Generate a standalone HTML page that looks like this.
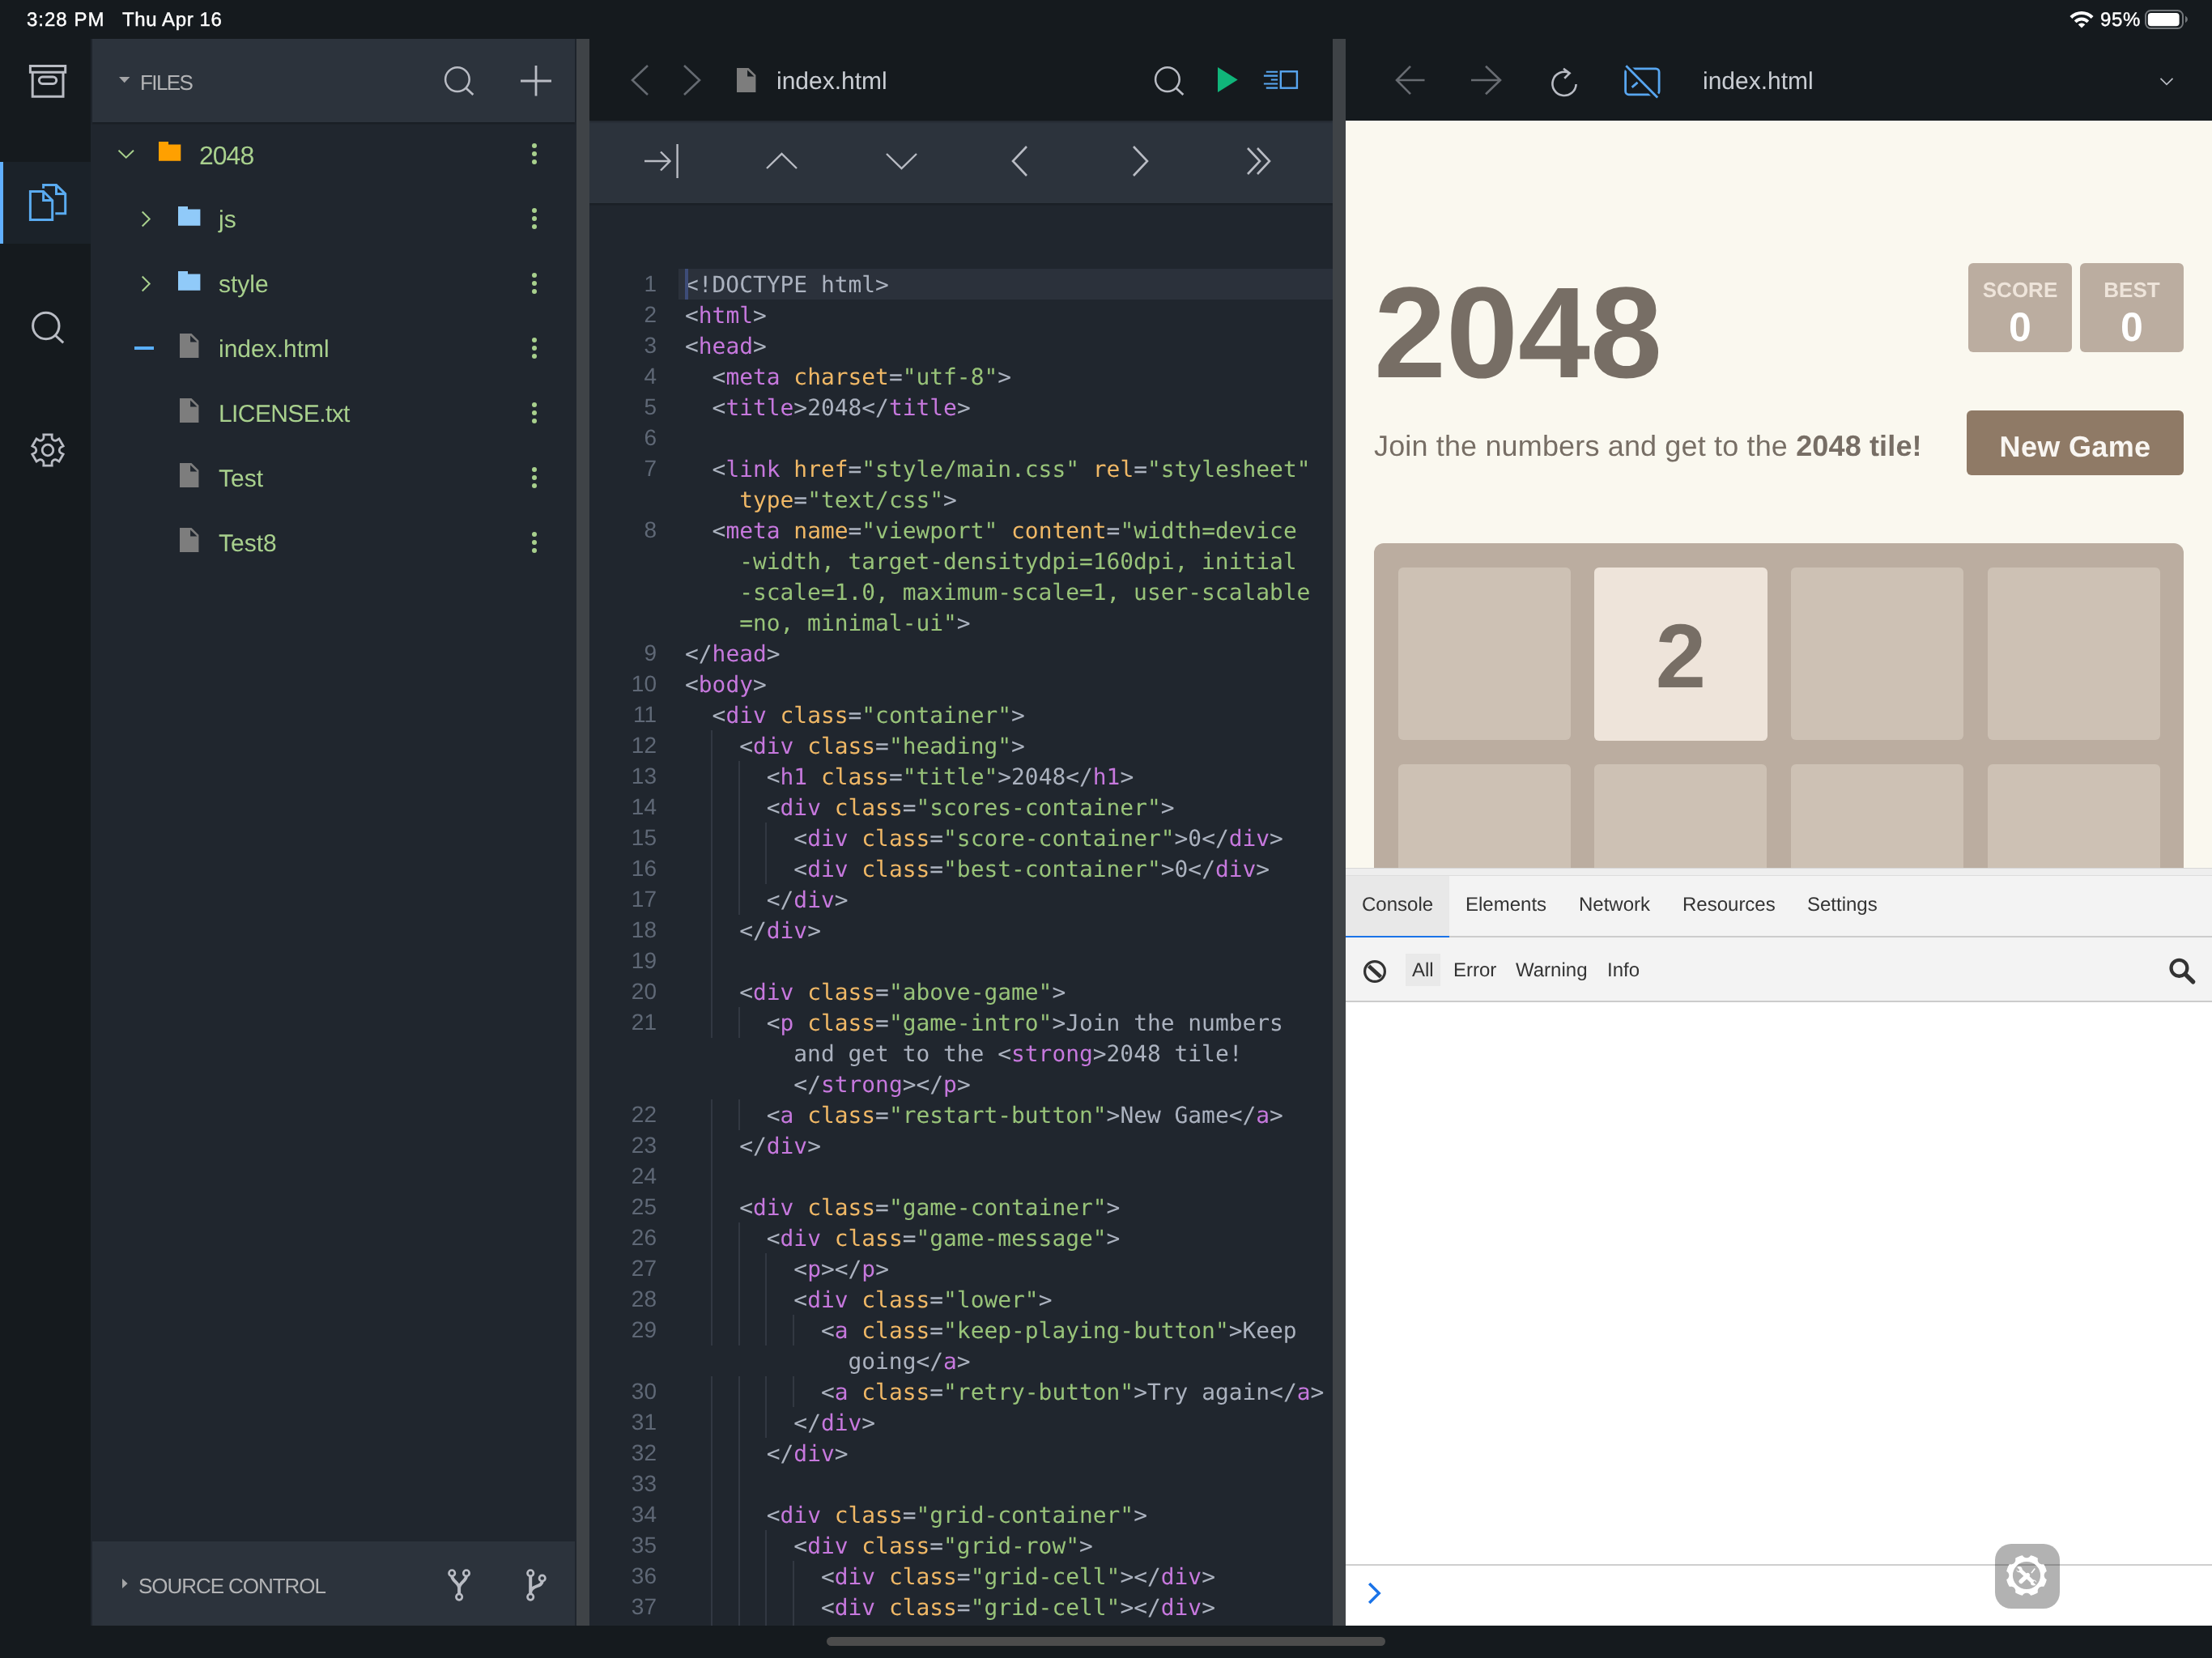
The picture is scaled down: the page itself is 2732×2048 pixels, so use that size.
<!DOCTYPE html>
<html lang="en">
<head>
<meta charset="utf-8">
<title>index.html — 2048</title>
<style>
*{box-sizing:border-box;margin:0;padding:0}
html,body{width:2732px;height:2048px;overflow:hidden;background:#151a1e}
body{position:relative;-webkit-font-smoothing:antialiased;text-rendering:geometricPrecision;font-family:"Liberation Sans",sans-serif;color:#fff}
.abs{position:absolute}
.gs,#status,.nm,.cap,.title,#game h1,.intro,.score small,.score b,.btn b,.tile b,#dev .tabs span,#dev .flt span{will-change:transform}
.score b,.btn b,.tile b{display:block;font-weight:bold}
svg{position:absolute;overflow:visible}
.st{fill:none;stroke:#b9bcc4;stroke-width:3;stroke-linecap:butt;stroke-linejoin:miter}

/* status bar */
#status{position:absolute;left:0;top:0;width:2732px;height:48px;font-weight:normal;font-size:24px;line-height:50px;color:#fff;-webkit-text-stroke:.4px #fff}
#status span{position:absolute;top:0;white-space:nowrap}

/* activity bar */
#act{position:absolute;left:0;top:48px;width:112px;height:1960px;background:#151a1e}
#act .sel{position:absolute;left:0;top:152px;width:112px;height:101px;background:#1b2229;border-left:4px solid #61b0ff}

/* files panel */
#files{position:absolute;left:112px;top:48px;width:600px;height:1960px;background:#20262e}
#files .hd{position:absolute;left:2px;top:0;width:596px;height:103px;background:#2c333c;box-shadow:0 2px 2px rgba(0,0,0,.25)}
#files .ft{position:absolute;left:2px;bottom:0;width:596px;height:104px;background:#2c333c}
.cap{position:absolute;font-size:26px;color:#b2b3b5;white-space:nowrap;line-height:30px}
.trow{position:absolute;left:0;width:599px;height:80px}
.trow .nm{position:absolute;top:2px;line-height:80px;font-size:30px;color:#a8d08d;white-space:nowrap}
.trow .dots{position:absolute;left:545px;top:27px;width:6px;height:26px}
.trow .dots i{position:absolute;left:0;width:6px;height:6px;border-radius:3px;background:#a8d08d}

.split{position:absolute;top:48px;height:1960px;background:#3f4347}

/* editor */
#ed{position:absolute;left:728px;top:48px;width:918px;height:1960px;background:#20262e;overflow:hidden}
#ed .hd{position:absolute;left:0;top:0;width:918px;height:101px;background:#151a1e;box-shadow:0 2px 2px rgba(0,0,0,.2);z-index:3}
#ed .tb{position:absolute;left:0;top:101px;width:918px;height:102px;background:#2c333c;box-shadow:0 2px 2px rgba(0,0,0,.22);z-index:2}
.title{position:absolute;font-size:30px;color:#c9cdd3;white-space:nowrap;line-height:36px}
#code{will-change:transform;position:absolute;left:0;top:203px;width:918px;height:1757px;overflow:hidden;font-family:"DejaVu Sans Mono","Liberation Mono",monospace;font-size:27.9px}
.row{position:absolute;left:0;width:918px;height:38px;line-height:38px;white-space:pre}
.row.cur:before{content:"";position:absolute;left:110px;right:0;top:0;height:38px;background:#2b313b}
.row.cur:after{content:"";position:absolute;left:117.5px;top:0;width:4px;height:38px;background:#3d4c78}
.row .c{position:absolute;left:118px;top:.5px;color:#abb2bf}
.row .ln{position:absolute;right:835px;top:0;font-family:"Liberation Sans",sans-serif;font-weight:normal;font-size:28px;color:#5f6876}
.row .g{position:absolute;top:0;width:2px;height:38px;background:#323842}
.t{color:#c678dd}.a{color:#f0b866}.s{color:#98c379}.p{color:#abb2bf}

/* preview */
#pv{position:absolute;left:1662px;top:48px;width:1070px;height:1960px;background:#faf8ef;overflow:hidden}
#pv .hd{position:absolute;left:0;top:0;width:1070px;height:101px;background:#151a1e}
#game{position:absolute;left:0;top:101px;width:1070px;height:923px;background:#faf8ef;color:#776e65;overflow:hidden}
#game h1{position:absolute;left:35px;top:167px;font-size:160px;font-weight:bold;line-height:190px;white-space:nowrap}
.score{position:absolute;top:176px;width:128px;height:110px;background:#bbada0;border-radius:6px;text-align:center;color:#fff;font-weight:bold;font-size:50px;line-height:60px}
.score small{display:block;margin-top:18px;font-size:26px;line-height:31px;color:#eee4da}
.intro{position:absolute;left:35px;top:360px;font-size:36px;line-height:84px;white-space:nowrap;letter-spacing:.15px}
.btn{position:absolute;left:767px;top:358px;width:268px;height:80px;border-radius:6px;background:#8f7a66;color:#f9f6f2;font-weight:bold;font-size:36px;line-height:89px;text-align:center;letter-spacing:.35px}
.board{position:absolute;left:35px;top:522px;width:1000px;height:1000px;border-radius:12px;background:#bbada0}
.cell{position:absolute;width:213px;height:213px;border-radius:6px;background:#cdc1b4}
.tile{background:#eee4da;color:#776e65;font-weight:bold;font-size:112px;line-height:220px;text-align:center}

/* devtools */
#dev{position:absolute;left:0;top:1024px;width:1070px;height:936px;background:#fff;color:#333}
#dev .grip{position:absolute;left:0;top:0;width:1070px;height:10px;background:#eee;border-top:1px solid #d8d8d8;border-bottom:1px solid #ddd}
#dev .tabs{position:absolute;left:0;top:10px;width:1070px;height:76px;background:#f3f3f3;border-bottom:2px solid #ccc;font-size:24px;line-height:72px}
#dev .tabs span{position:absolute;top:0;height:76px;white-space:nowrap}
#dev .tabs .on{left:0;width:128px;background:#e8e8e8;border-bottom:2px solid #1a73e8}
#dev .flt{position:absolute;left:0;top:86px;width:1070px;height:80px;background:#f3f3f3;border-bottom:2px solid #ccc;font-size:24px;line-height:77px}
#dev .flt span{position:absolute;top:2px;white-space:nowrap}
#dev .flt .all{left:74px;top:20px;width:43px;height:40px;background:#e9e9e9}
#dev .inp{position:absolute;left:0;top:860px;width:1070px;height:76px;border-top:2px solid #cfcfcf;background:#fff}
#eruda{position:absolute;left:802px;top:835px;width:80px;height:80px;border-radius:20px;background:rgba(0,0,0,.3)}

#home{position:absolute;left:1021px;top:2022px;width:690px;height:11px;border-radius:5.5px;background:#4c4c4c}
</style>
</head>
<body>

<!-- ============ STATUS BAR ============ -->
<div id="status">
  <span style="left:33px;letter-spacing:1px">3:28 PM</span>
  <span style="left:151px;letter-spacing:.6px">Thu Apr 16</span>
  <span style="left:2594px;letter-spacing:.7px">95%</span>
  <svg style="left:2557px;top:13.7px" width="28" height="22" viewBox="0 0 28 22"><path d="M-0.57 6.03A20.60 20.60 0 0 1 28.57 6.03L25.67 8.93A16.50 16.50 0 0 0 2.33 8.93ZM4.81 11.41A13.00 13.00 0 0 1 23.19 11.41L20.43 14.17A9.10 9.10 0 0 0 7.57 14.17ZM14 20.6L9.69 16.29A6.1 6.1 0 0 1 18.31 16.29Z" fill="#fff"/></svg>
  <svg style="left:2649px;top:12px" width="54" height="24" viewBox="0 0 54 24"><rect x="1" y="1" width="46" height="22" rx="6.5" fill="none" stroke="#73777b" stroke-width="2"/><rect x="3.8" y="3.9" width="38.8" height="16.3" rx="4" fill="#fff"/><path d="M50 7.4 Q53 9 53 11.8 Q53 14.6 50 16.2 Z" fill="#73777b"/></svg>
</div>

<!-- ============ ACTIVITY BAR ============ -->
<div id="act">
  <div class="sel"></div>
  <!-- archive -->
  <svg style="left:35px;top:31px" width="48" height="44" viewBox="0 0 48 44"><path class="st" d="M2.4 2.5H45.7V10.3H2.4Z M5.2 10.3V40.3H43V10.3"/><rect class="st" x="13.3" y="16.1" width="21.4" height="8.3" rx="4.15"/></svg>
  <!-- files -->
  <svg style="left:35px;top:178px" width="48" height="48" viewBox="0 0 48 48"><path class="st" style="stroke:#5aabf0" d="M18.6 6.8V2.4H34.5L45.7 13.5V37.8H33.3 M34.5 2.4V13.5H45.7 M2.4 10.4H18.6L29.7 21.5V45.6H2.4Z M18.6 10.4V21.5H29.7"/></svg>
  <!-- search -->
  <svg style="left:38px;top:336px" width="42" height="42" viewBox="0 0 42 42"><circle class="st" cx="18.8" cy="18.5" r="16.2"/><path class="st" d="M30 30L40.2 39.4"/></svg>
  <!-- gear -->
  <svg style="left:38px;top:487px" width="42" height="42" viewBox="0 0 42 42"><circle class="st" style="stroke-width:2.8" cx="21" cy="21" r="6.8"/><path class="st" style="stroke-width:2.8" d="M16.01 5.17 L15.81 1.89 L26.19 1.89 L25.99 5.17 A4.22 4.22 0 0 0 32.21 8.76 L34.95 6.95 L40.14 15.94 L37.21 17.41 A4.22 4.22 0 0 0 37.21 24.59 L40.14 26.06 L34.95 35.05 L32.21 33.24 A4.22 4.22 0 0 0 25.99 36.83 L26.19 40.11 L15.81 40.11 L16.01 36.83 A4.22 4.22 0 0 0 9.79 33.24 L7.05 35.05 L1.86 26.06 L4.79 24.59 A4.22 4.22 0 0 0 4.79 17.41 L1.86 15.94 L7.05 6.95 L9.79 8.76 A4.22 4.22 0 0 0 16.01 5.17 Z"/></svg>
</div>

<!-- ============ FILES PANEL ============ -->
<div id="files">
  <div class="hd">
    <svg style="left:33px;top:47px" width="14" height="8" viewBox="0 0 14 8"><path d="M0 0H13.4L6.7 7.3Z" fill="#a4a5a7"/></svg>
    <span class="cap" style="left:59px;top:39px;letter-spacing:-1.6px">FILES</span>
    <svg style="left:434px;top:34px" width="38" height="38" viewBox="0 0 38 38"><circle class="st" style="stroke-width:2.5" cx="16.9" cy="16.1" r="14.8"/><path class="st" style="stroke-width:2.7" d="M27.2 26.4L36.4 35.1"/></svg>
    <svg style="left:529px;top:33px" width="38" height="38" viewBox="0 0 38 38"><path class="st" style="stroke-width:2.8" d="M19 0V37.5M0 19H38"/></svg>
  </div>

  <div class="trow" style="top:102px">
    <svg style="left:34px;top:35px" width="20" height="11" viewBox="0 0 20 11"><path class="st" style="stroke:#a8d08d;stroke-width:2" d="M0.5 0.7L9.7 9.6L19 0.7"/></svg>
    <svg style="left:84px;top:25px" width="28" height="24" viewBox="0 0 28 24"><path d="M0 0H12V3.6H27.3V23.7H0Z" fill="#ffa000"/></svg>
    <span class="nm" style="left:134px;font-size:32px;letter-spacing:-1px">2048</span>
    <div class="dots"><i style="top:0"></i><i style="top:10px"></i><i style="top:20px"></i></div>
  </div>
  <div class="trow" style="top:182px">
    <svg style="left:62.5px;top:30.5px" width="11" height="20" viewBox="0 0 11 20"><path class="st" style="stroke:#a8d08d;stroke-width:2" d="M0.7 0.5L9.7 9.5L0.7 18.5"/></svg>
    <svg style="left:108px;top:25px" width="28" height="24" viewBox="0 0 28 24"><path d="M0 0H12V3.6H27.4V23.7H0Z" fill="#90caf9"/></svg>
    <span class="nm" style="left:158px">js</span>
    <div class="dots"><i style="top:0"></i><i style="top:10px"></i><i style="top:20px"></i></div>
  </div>
  <div class="trow" style="top:262px">
    <svg style="left:62.5px;top:30.5px" width="11" height="20" viewBox="0 0 11 20"><path class="st" style="stroke:#a8d08d;stroke-width:2" d="M0.7 0.5L9.7 9.5L0.7 18.5"/></svg>
    <svg style="left:108px;top:25px" width="28" height="24" viewBox="0 0 28 24"><path d="M0 0H12V3.6H27.4V23.7H0Z" fill="#90caf9"/></svg>
    <span class="nm" style="left:158px">style</span>
    <div class="dots"><i style="top:0"></i><i style="top:10px"></i><i style="top:20px"></i></div>
  </div>
  <div class="trow" style="top:342px">
    <i class="abs" style="left:54px;top:38px;width:24px;height:4px;background:#5aafff"></i>
    <svg style="left:110px;top:22px" width="24" height="30" viewBox="0 0 24 30"><path fill-rule="evenodd" d="M0 0H14.5L23.4 8.7V30H0Z M13.1 2.5V10.6H21.5Z" fill="#7d7d7d"/></svg>
    <span class="nm" style="left:158px">index.html</span>
    <div class="dots"><i style="top:0"></i><i style="top:10px"></i><i style="top:20px"></i></div>
  </div>
  <div class="trow" style="top:422px">
    <svg style="left:110px;top:22px" width="24" height="30" viewBox="0 0 24 30"><path fill-rule="evenodd" d="M0 0H14.5L23.4 8.7V30H0Z M13.1 2.5V10.6H21.5Z" fill="#7d7d7d"/></svg>
    <span class="nm" style="left:158px;letter-spacing:-.6px">LICENSE.txt</span>
    <div class="dots"><i style="top:0"></i><i style="top:10px"></i><i style="top:20px"></i></div>
  </div>
  <div class="trow" style="top:502px">
    <svg style="left:110px;top:22px" width="24" height="30" viewBox="0 0 24 30"><path fill-rule="evenodd" d="M0 0H14.5L23.4 8.7V30H0Z M13.1 2.5V10.6H21.5Z" fill="#7d7d7d"/></svg>
    <span class="nm" style="left:158px">Test</span>
    <div class="dots"><i style="top:0"></i><i style="top:10px"></i><i style="top:20px"></i></div>
  </div>
  <div class="trow" style="top:582px">
    <svg style="left:110px;top:22px" width="24" height="30" viewBox="0 0 24 30"><path fill-rule="evenodd" d="M0 0H14.5L23.4 8.7V30H0Z M13.1 2.5V10.6H21.5Z" fill="#7d7d7d"/></svg>
    <span class="nm" style="left:158px">Test8</span>
    <div class="dots"><i style="top:0"></i><i style="top:10px"></i><i style="top:20px"></i></div>
  </div>

  <div class="ft">
    <svg style="left:37px;top:46px" width="8" height="14" viewBox="0 0 8 14"><path d="M0 0L6.6 6L0 12Z" fill="#a4a5a7"/></svg>
    <span class="cap" style="left:57px;top:40px;letter-spacing:-1.05px">SOURCE CONTROL</span>
    <!-- fork -->
    <svg style="left:438.7px;top:34.3px" width="30" height="40" viewBox="0 0 30 40"><g class="st" style="stroke-width:2.7"><circle cx="5.2" cy="5.2" r="3.7"/><circle cx="23" cy="5.2" r="3.7"/><circle cx="14.1" cy="34.6" r="3.7"/></g><path class="st" style="stroke-width:4" d="M5.2 8.8C5.6 15 14.1 17.5 14.1 23.5V31 M23 8.8C22.6 15 14.1 17.5 14.1 23.5"/></svg>
    <!-- branch -->
    <svg style="left:536.4px;top:34.3px" width="30" height="40" viewBox="0 0 30 40"><g class="st" style="stroke-width:2.7"><circle cx="5.2" cy="5.2" r="3.7"/><circle cx="19.7" cy="11.5" r="3.7"/><circle cx="5.2" cy="34.6" r="3.7"/></g><path class="st" style="stroke-width:4" d="M5.2 8.8V31 M19.7 15.2C19.5 22.5 6 20 5.2 29"/></svg>
  </div>
</div>
<div class="split" style="left:712px;width:16px"></div>

<!-- ============ EDITOR ============ -->
<div id="ed">
  <div class="hd">
    <svg style="left:51px;top:31.5px" width="22" height="38" viewBox="0 0 22 38"><path class="st" style="stroke:#656a71;stroke-width:2.6" d="M21 1L2 19L21 37"/></svg>
    <svg style="left:116px;top:31.5px" width="22" height="38" viewBox="0 0 22 38"><path class="st" style="stroke:#656a71;stroke-width:2.6" d="M1 1L20 19L1 37"/></svg>
    <svg style="left:182px;top:36px" width="24" height="30" viewBox="0 0 24 30"><path fill-rule="evenodd" d="M0 0H14.5L23.4 8.7V30H0Z M13.1 2.5V10.6H21.5Z" fill="#7d7d7d"/></svg>
    <span class="title" style="left:231px;top:35px">index.html</span>
    <svg style="left:697px;top:34px" width="38" height="38" viewBox="0 0 38 38"><circle class="st" style="stroke-width:2.5" cx="16.9" cy="16.1" r="14.8"/><path class="st" style="stroke-width:2.7" d="M27.2 26.4L36.4 35.1"/></svg>
    <svg style="left:775.5px;top:35px" width="25" height="31" viewBox="0 0 25 31"><path d="M0 0L24.7 15.5L0 31Z" fill="#10b57a"/></svg>
    <svg style="left:832px;top:39px" width="44" height="24" viewBox="0 0 44 24"><path class="st" style="stroke:#58a6f0;stroke-width:2.2" d="M3.8 1.75H18.1 M0.9 6.6H18.1 M9.8 11.5H18.1 M0.9 16.5H18.1 M3.8 21.55H18.1"/><rect class="st" style="stroke:#58a6f0;stroke-width:2.4" x="21.8" y="1.3" width="20.1" height="20.4"/></svg>
  </div>
  <div class="tb">
    <!-- tab -->
    <svg style="left:68px;top:28.5px" width="44" height="42" viewBox="0 0 44 42"><path class="st" style="stroke-width:2.4" d="M0 21H31.5 M20 9.5L31.5 21L20 32.5 M40.6 0V42"/></svg>
    <svg style="left:217.5px;top:38.5px" width="39" height="21" viewBox="0 0 39 21"><path class="st" style="stroke-width:2.4" d="M1 20L19.5 2L38 20"/></svg>
    <svg style="left:365.5px;top:40px" width="39" height="21" viewBox="0 0 39 21"><path class="st" style="stroke-width:2.4" d="M1 1L19.5 19L38 1"/></svg>
    <svg style="left:521px;top:31px" width="20" height="38" viewBox="0 0 20 38"><path class="st" style="stroke-width:2.6" d="M19 1L2 19L19 37"/></svg>
    <svg style="left:671px;top:31px" width="20" height="38" viewBox="0 0 20 38"><path class="st" style="stroke-width:2.6" d="M1 1L18 19L1 37"/></svg>
    <svg style="left:812px;top:33px" width="30" height="34" viewBox="0 0 30 34"><path class="st" style="stroke-width:2.6" d="M1 1L16 17L1 33 M13 1L28 17L13 33"/></svg>
  </div>
  <div id="code">
<div class="row cur" style="top:81px"><b class="ln">1</b><span class="c"><span class="p">&lt;!DOCTYPE html&gt;</span></span></div>
<div class="row" style="top:119px"><b class="ln">2</b><span class="c"><span class="p">&lt;</span><span class="t">html</span><span class="p">&gt;</span></span></div>
<div class="row" style="top:157px"><b class="ln">3</b><span class="c"><span class="p">&lt;</span><span class="t">head</span><span class="p">&gt;</span></span></div>
<div class="row" style="top:195px"><b class="ln">4</b><span class="c"><span class="p">  </span><span class="p">&lt;</span><span class="t">meta</span> <span class="a">charset</span><span class="p">=</span><span class="s">&quot;utf-8&quot;</span><span class="p">&gt;</span></span></div>
<div class="row" style="top:233px"><b class="ln">5</b><span class="c"><span class="p">  </span><span class="p">&lt;</span><span class="t">title</span><span class="p">&gt;</span><span class="p">2048</span><span class="p">&lt;/</span><span class="t">title</span><span class="p">&gt;</span></span></div>
<div class="row" style="top:271px"><b class="ln">6</b><span class="c"></span></div>
<div class="row" style="top:309px"><b class="ln">7</b><span class="c"><span class="p">  </span><span class="p">&lt;</span><span class="t">link</span> <span class="a">href</span><span class="p">=</span><span class="s">&quot;style/main.css&quot;</span> <span class="a">rel</span><span class="p">=</span><span class="s">&quot;stylesheet&quot;</span></span></div>
<div class="row" style="top:347px"><span class="c">    <span class="a">type</span><span class="p">=</span><span class="s">&quot;text/css&quot;</span><span class="p">&gt;</span></span></div>
<div class="row" style="top:385px"><b class="ln">8</b><span class="c"><span class="p">  </span><span class="p">&lt;</span><span class="t">meta</span> <span class="a">name</span><span class="p">=</span><span class="s">&quot;viewport&quot;</span> <span class="a">content</span><span class="p">=</span><span class="s">&quot;width=device</span></span></div>
<div class="row" style="top:423px"><span class="c"><span class="s">    -width, target-densitydpi=160dpi, initial</span></span></div>
<div class="row" style="top:461px"><span class="c"><span class="s">    -scale=1.0, maximum-scale=1, user-scalable</span></span></div>
<div class="row" style="top:499px"><span class="c"><span class="s">    =no, minimal-ui&quot;</span><span class="p">&gt;</span></span></div>
<div class="row" style="top:537px"><b class="ln">9</b><span class="c"><span class="p">&lt;/</span><span class="t">head</span><span class="p">&gt;</span></span></div>
<div class="row" style="top:575px"><b class="ln">10</b><span class="c"><span class="p">&lt;</span><span class="t">body</span><span class="p">&gt;</span></span></div>
<div class="row" style="top:613px"><b class="ln">11</b><span class="c"><span class="p">  </span><span class="p">&lt;</span><span class="t">div</span> <span class="a">class</span><span class="p">=</span><span class="s">&quot;container&quot;</span><span class="p">&gt;</span></span></div>
<div class="row" style="top:651px"><b class="ln">12</b><i class="g" style="left:150.1px"></i><span class="c"><span class="p">    </span><span class="p">&lt;</span><span class="t">div</span> <span class="a">class</span><span class="p">=</span><span class="s">&quot;heading&quot;</span><span class="p">&gt;</span></span></div>
<div class="row" style="top:689px"><b class="ln">13</b><i class="g" style="left:150.1px"></i><i class="g" style="left:183.7px"></i><span class="c"><span class="p">      </span><span class="p">&lt;</span><span class="t">h1</span> <span class="a">class</span><span class="p">=</span><span class="s">&quot;title&quot;</span><span class="p">&gt;</span><span class="p">2048</span><span class="p">&lt;/</span><span class="t">h1</span><span class="p">&gt;</span></span></div>
<div class="row" style="top:727px"><b class="ln">14</b><i class="g" style="left:150.1px"></i><i class="g" style="left:183.7px"></i><span class="c"><span class="p">      </span><span class="p">&lt;</span><span class="t">div</span> <span class="a">class</span><span class="p">=</span><span class="s">&quot;scores-container&quot;</span><span class="p">&gt;</span></span></div>
<div class="row" style="top:765px"><b class="ln">15</b><i class="g" style="left:150.1px"></i><i class="g" style="left:183.7px"></i><i class="g" style="left:217.3px"></i><span class="c"><span class="p">        </span><span class="p">&lt;</span><span class="t">div</span> <span class="a">class</span><span class="p">=</span><span class="s">&quot;score-container&quot;</span><span class="p">&gt;</span><span class="p">0</span><span class="p">&lt;/</span><span class="t">div</span><span class="p">&gt;</span></span></div>
<div class="row" style="top:803px"><b class="ln">16</b><i class="g" style="left:150.1px"></i><i class="g" style="left:183.7px"></i><i class="g" style="left:217.3px"></i><span class="c"><span class="p">        </span><span class="p">&lt;</span><span class="t">div</span> <span class="a">class</span><span class="p">=</span><span class="s">&quot;best-container&quot;</span><span class="p">&gt;</span><span class="p">0</span><span class="p">&lt;/</span><span class="t">div</span><span class="p">&gt;</span></span></div>
<div class="row" style="top:841px"><b class="ln">17</b><i class="g" style="left:150.1px"></i><i class="g" style="left:183.7px"></i><span class="c"><span class="p">      </span><span class="p">&lt;/</span><span class="t">div</span><span class="p">&gt;</span></span></div>
<div class="row" style="top:879px"><b class="ln">18</b><i class="g" style="left:150.1px"></i><span class="c"><span class="p">    </span><span class="p">&lt;/</span><span class="t">div</span><span class="p">&gt;</span></span></div>
<div class="row" style="top:917px"><b class="ln">19</b><i class="g" style="left:150.1px"></i><span class="c"></span></div>
<div class="row" style="top:955px"><b class="ln">20</b><i class="g" style="left:150.1px"></i><span class="c"><span class="p">    </span><span class="p">&lt;</span><span class="t">div</span> <span class="a">class</span><span class="p">=</span><span class="s">&quot;above-game&quot;</span><span class="p">&gt;</span></span></div>
<div class="row" style="top:993px"><b class="ln">21</b><i class="g" style="left:150.1px"></i><i class="g" style="left:183.7px"></i><span class="c"><span class="p">      </span><span class="p">&lt;</span><span class="t">p</span> <span class="a">class</span><span class="p">=</span><span class="s">&quot;game-intro&quot;</span><span class="p">&gt;</span><span class="p">Join the numbers</span></span></div>
<div class="row" style="top:1031px"><span class="c"><span class="p">        and get to the </span><span class="p">&lt;</span><span class="t">strong</span><span class="p">&gt;</span><span class="p">2048 tile!</span></span></div>
<div class="row" style="top:1069px"><span class="c"><span class="p">        </span><span class="p">&lt;/</span><span class="t">strong</span><span class="p">&gt;</span><span class="p">&lt;/</span><span class="t">p</span><span class="p">&gt;</span></span></div>
<div class="row" style="top:1107px"><b class="ln">22</b><i class="g" style="left:150.1px"></i><i class="g" style="left:183.7px"></i><span class="c"><span class="p">      </span><span class="p">&lt;</span><span class="t">a</span> <span class="a">class</span><span class="p">=</span><span class="s">&quot;restart-button&quot;</span><span class="p">&gt;</span><span class="p">New Game</span><span class="p">&lt;/</span><span class="t">a</span><span class="p">&gt;</span></span></div>
<div class="row" style="top:1145px"><b class="ln">23</b><i class="g" style="left:150.1px"></i><span class="c"><span class="p">    </span><span class="p">&lt;/</span><span class="t">div</span><span class="p">&gt;</span></span></div>
<div class="row" style="top:1183px"><b class="ln">24</b><i class="g" style="left:150.1px"></i><span class="c"></span></div>
<div class="row" style="top:1221px"><b class="ln">25</b><i class="g" style="left:150.1px"></i><span class="c"><span class="p">    </span><span class="p">&lt;</span><span class="t">div</span> <span class="a">class</span><span class="p">=</span><span class="s">&quot;game-container&quot;</span><span class="p">&gt;</span></span></div>
<div class="row" style="top:1259px"><b class="ln">26</b><i class="g" style="left:150.1px"></i><i class="g" style="left:183.7px"></i><span class="c"><span class="p">      </span><span class="p">&lt;</span><span class="t">div</span> <span class="a">class</span><span class="p">=</span><span class="s">&quot;game-message&quot;</span><span class="p">&gt;</span></span></div>
<div class="row" style="top:1297px"><b class="ln">27</b><i class="g" style="left:150.1px"></i><i class="g" style="left:183.7px"></i><i class="g" style="left:217.3px"></i><span class="c"><span class="p">        </span><span class="p">&lt;</span><span class="t">p</span><span class="p">&gt;</span><span class="p">&lt;/</span><span class="t">p</span><span class="p">&gt;</span></span></div>
<div class="row" style="top:1335px"><b class="ln">28</b><i class="g" style="left:150.1px"></i><i class="g" style="left:183.7px"></i><i class="g" style="left:217.3px"></i><span class="c"><span class="p">        </span><span class="p">&lt;</span><span class="t">div</span> <span class="a">class</span><span class="p">=</span><span class="s">&quot;lower&quot;</span><span class="p">&gt;</span></span></div>
<div class="row" style="top:1373px"><b class="ln">29</b><i class="g" style="left:150.1px"></i><i class="g" style="left:183.7px"></i><i class="g" style="left:217.3px"></i><i class="g" style="left:250.9px"></i><span class="c"><span class="p">          </span><span class="p">&lt;</span><span class="t">a</span> <span class="a">class</span><span class="p">=</span><span class="s">&quot;keep-playing-button&quot;</span><span class="p">&gt;</span><span class="p">Keep</span></span></div>
<div class="row" style="top:1411px"><span class="c"><span class="p">            going</span><span class="p">&lt;/</span><span class="t">a</span><span class="p">&gt;</span></span></div>
<div class="row" style="top:1449px"><b class="ln">30</b><i class="g" style="left:150.1px"></i><i class="g" style="left:183.7px"></i><i class="g" style="left:217.3px"></i><i class="g" style="left:250.9px"></i><span class="c"><span class="p">          </span><span class="p">&lt;</span><span class="t">a</span> <span class="a">class</span><span class="p">=</span><span class="s">&quot;retry-button&quot;</span><span class="p">&gt;</span><span class="p">Try again</span><span class="p">&lt;/</span><span class="t">a</span><span class="p">&gt;</span></span></div>
<div class="row" style="top:1487px"><b class="ln">31</b><i class="g" style="left:150.1px"></i><i class="g" style="left:183.7px"></i><i class="g" style="left:217.3px"></i><span class="c"><span class="p">        </span><span class="p">&lt;/</span><span class="t">div</span><span class="p">&gt;</span></span></div>
<div class="row" style="top:1525px"><b class="ln">32</b><i class="g" style="left:150.1px"></i><i class="g" style="left:183.7px"></i><span class="c"><span class="p">      </span><span class="p">&lt;/</span><span class="t">div</span><span class="p">&gt;</span></span></div>
<div class="row" style="top:1563px"><b class="ln">33</b><i class="g" style="left:150.1px"></i><i class="g" style="left:183.7px"></i><span class="c"></span></div>
<div class="row" style="top:1601px"><b class="ln">34</b><i class="g" style="left:150.1px"></i><i class="g" style="left:183.7px"></i><span class="c"><span class="p">      </span><span class="p">&lt;</span><span class="t">div</span> <span class="a">class</span><span class="p">=</span><span class="s">&quot;grid-container&quot;</span><span class="p">&gt;</span></span></div>
<div class="row" style="top:1639px"><b class="ln">35</b><i class="g" style="left:150.1px"></i><i class="g" style="left:183.7px"></i><i class="g" style="left:217.3px"></i><span class="c"><span class="p">        </span><span class="p">&lt;</span><span class="t">div</span> <span class="a">class</span><span class="p">=</span><span class="s">&quot;grid-row&quot;</span><span class="p">&gt;</span></span></div>
<div class="row" style="top:1677px"><b class="ln">36</b><i class="g" style="left:150.1px"></i><i class="g" style="left:183.7px"></i><i class="g" style="left:217.3px"></i><i class="g" style="left:250.9px"></i><span class="c"><span class="p">          </span><span class="p">&lt;</span><span class="t">div</span> <span class="a">class</span><span class="p">=</span><span class="s">&quot;grid-cell&quot;</span><span class="p">&gt;</span><span class="p">&lt;/</span><span class="t">div</span><span class="p">&gt;</span></span></div>
<div class="row" style="top:1715px"><b class="ln">37</b><i class="g" style="left:150.1px"></i><i class="g" style="left:183.7px"></i><i class="g" style="left:217.3px"></i><i class="g" style="left:250.9px"></i><span class="c"><span class="p">          </span><span class="p">&lt;</span><span class="t">div</span> <span class="a">class</span><span class="p">=</span><span class="s">&quot;grid-cell&quot;</span><span class="p">&gt;</span><span class="p">&lt;/</span><span class="t">div</span><span class="p">&gt;</span></span></div>
<div class="row" style="top:1753px"><i class="g" style="left:150.1px"></i><i class="g" style="left:183.7px"></i><i class="g" style="left:217.3px"></i><i class="g" style="left:250.9px"></i><span class="c"></span></div>
  </div>
</div>
<div class="split" style="left:1646px;width:16px"></div>

<!-- ============ PREVIEW ============ -->
<div id="pv">
  <div class="hd">
    <svg style="left:61px;top:32.5px" width="38" height="36" viewBox="0 0 38 36"><path class="st" style="stroke:#686c72;stroke-width:2.6" d="M36.5 18H2 M19 0.8L2 18L19 35.2"/></svg>
    <svg style="left:155px;top:32.5px" width="38" height="36" viewBox="0 0 38 36"><path class="st" style="stroke:#686c72;stroke-width:2.6" d="M0 18H36 M18 0.8L36 18L18 35.2"/></svg>
    <svg style="left:252px;top:34px" width="36" height="40" viewBox="0 0 36 40"><path class="st" style="stroke-width:2.6" d="M32.6 22A14.6 14.6 0 1 1 24.2 8.2 M17 2.8L24.6 8.4L18.2 14.7"/></svg>
    <svg style="left:342px;top:32px" width="48" height="42" viewBox="0 0 48 42"><g class="st" style="stroke:#58a6f0;stroke-width:2.8"><rect x="3.6" y="4.9" width="41.5" height="31.9" rx="4"/><path d="M11.6 27.9L18.8 21.6"/><path d="M3 0L45 42.5" style="stroke:#151a1e;stroke-width:8.5"/><path d="M4.3 1.3L43.2 40.6"/></g></svg>
    <span class="title" style="left:441px;top:35px">index.html</span>
    <svg style="left:1006px;top:47.5px" width="16" height="10" viewBox="0 0 16 10"><path class="st" style="stroke-width:1.7" d="M0.5 0.8L8 8.3L15.5 0.8"/></svg>
  </div>

  <div id="game">
    <h1>2048</h1>
    <div class="score" style="left:769px"><small>SCORE</small><b>0</b></div>
    <div class="score" style="left:907px"><small>BEST</small><b>0</b></div>
    <p class="intro">Join the numbers and get to the <strong>2048 tile!</strong></p>
    <div class="btn"><b>New Game</b></div>
    <div class="board">
      <div class="cell" style="left:30px;top:30px"></div>
      <div class="cell tile" style="left:272px;top:30px;width:214px;height:214px"><b>2</b></div>
      <div class="cell" style="left:515px;top:30px"></div>
      <div class="cell" style="left:758px;top:30px"></div>
      <div class="cell" style="left:30px;top:273px"></div>
      <div class="cell" style="left:272px;top:273px"></div>
      <div class="cell" style="left:515px;top:273px"></div>
      <div class="cell" style="left:758px;top:273px"></div>
    </div>
  </div>

  <div id="dev">
    <div class="grip"></div>
    <div class="tabs">
      <span class="on"></span>
      <span style="left:20px">Console</span>
      <span style="left:148px">Elements</span>
      <span style="left:288px">Network</span>
      <span style="left:416px">Resources</span>
      <span style="left:570px">Settings</span>
    </div>
    <div class="flt">
      <svg style="left:21px;top:27px" width="30" height="30" viewBox="0 0 30 30"><circle cx="15" cy="15" r="12.4" fill="none" stroke="#333" stroke-width="3.2"/><path d="M7.6 8.2L22.4 21.8" stroke="#333" stroke-width="4.8"/></svg>
      <span class="all"></span>
      <span style="left:82px">All</span>
      <span style="left:133px">Error</span>
      <span style="left:210px">Warning</span>
      <span style="left:323px">Info</span>
      <svg style="left:1017px;top:25px" width="34" height="34" viewBox="0 0 34 34"><circle cx="12.45" cy="12.85" r="9.9" fill="none" stroke="#333" stroke-width="4.3"/><path d="M20 20.4L29.6 29.8" stroke="#333" stroke-width="5.4" stroke-linecap="round"/></svg>
    </div>
    <div class="inp">
      <svg style="left:27px;top:20px" width="18" height="28" viewBox="0 0 18 28"><path d="M2.2 2L14.2 14L2.2 26" fill="none" stroke="#1a73e8" stroke-width="3.5"/></svg>
    </div>
    <div id="eruda">
      <svg style="left:-1px;top:-1px" width="80" height="80" viewBox="0 0 80 80"><path fill="#fff" fill-rule="evenodd" d="M61.70 40.00 L61.70 40.19 L61.71 40.38 L61.73 40.57 L61.75 40.76 L61.78 40.95 L61.82 41.14 L61.86 41.34 L61.91 41.53 L61.97 41.73 L62.04 41.93 L62.12 42.13 L62.21 42.33 L62.31 42.54 L62.42 42.75 L62.55 42.97 L62.70 43.19 L62.86 43.42 L63.05 43.65 L63.28 43.90 L63.54 44.15 L63.87 44.42 L64.29 44.72 L64.79 45.04 L64.75 45.26 L64.70 45.48 L64.65 45.69 L64.60 45.91 L64.55 46.12 L64.49 46.33 L64.44 46.55 L64.38 46.76 L64.32 46.97 L64.26 47.19 L64.19 47.40 L64.13 47.61 L64.06 47.82 L63.99 48.03 L63.92 48.24 L63.85 48.45 L63.77 48.65 L63.70 48.86 L63.62 49.07 L63.54 49.27 L63.46 49.48 L63.37 49.68 L63.29 49.89 L63.20 50.09 L63.11 50.29 L63.02 50.49 L62.93 50.69 L62.84 50.89 L62.74 51.09 L62.64 51.29 L62.54 51.49 L62.44 51.68 L62.34 51.88 L62.23 52.07 L62.13 52.27 L62.02 52.46 L61.91 52.65 L61.80 52.84 L61.69 53.03 L61.57 53.22 L61.46 53.41 L61.34 53.59 L61.22 53.78 L61.10 53.96 L60.51 53.84 L60.00 53.75 L59.58 53.71 L59.21 53.70 L58.88 53.72 L58.58 53.75 L58.31 53.79 L58.05 53.85 L57.80 53.91 L57.57 53.98 L57.36 54.05 L57.15 54.14 L56.95 54.22 L56.76 54.31 L56.58 54.41 L56.40 54.51 L56.24 54.62 L56.07 54.73 L55.92 54.84 L55.77 54.96 L55.62 55.09 L55.48 55.21 L55.34 55.34 L55.21 55.48 L55.09 55.62 L54.96 55.77 L54.84 55.92 L54.73 56.07 L54.62 56.24 L54.51 56.40 L54.41 56.58 L54.31 56.76 L54.22 56.95 L54.14 57.15 L54.05 57.36 L53.98 57.57 L53.91 57.80 L53.85 58.05 L53.79 58.31 L53.75 58.58 L53.72 58.88 L53.70 59.21 L53.71 59.58 L53.75 60.00 L53.84 60.51 L53.96 61.10 L53.78 61.22 L53.59 61.34 L53.41 61.46 L53.22 61.57 L53.03 61.69 L52.84 61.80 L52.65 61.91 L52.46 62.02 L52.27 62.13 L52.07 62.23 L51.88 62.34 L51.68 62.44 L51.49 62.54 L51.29 62.64 L51.09 62.74 L50.89 62.84 L50.69 62.93 L50.49 63.02 L50.29 63.11 L50.09 63.20 L49.89 63.29 L49.68 63.37 L49.48 63.46 L49.27 63.54 L49.07 63.62 L48.86 63.70 L48.65 63.77 L48.45 63.85 L48.24 63.92 L48.03 63.99 L47.82 64.06 L47.61 64.13 L47.40 64.19 L47.19 64.26 L46.97 64.32 L46.76 64.38 L46.55 64.44 L46.33 64.49 L46.12 64.55 L45.91 64.60 L45.69 64.65 L45.48 64.70 L45.26 64.75 L45.04 64.79 L44.72 64.29 L44.42 63.87 L44.15 63.54 L43.90 63.28 L43.65 63.05 L43.42 62.86 L43.19 62.70 L42.97 62.55 L42.75 62.42 L42.54 62.31 L42.33 62.21 L42.13 62.12 L41.93 62.04 L41.73 61.97 L41.53 61.91 L41.34 61.86 L41.14 61.82 L40.95 61.78 L40.76 61.75 L40.57 61.73 L40.38 61.71 L40.19 61.70 L40.00 61.70 L39.81 61.70 L39.62 61.71 L39.43 61.73 L39.24 61.75 L39.05 61.78 L38.86 61.82 L38.66 61.86 L38.47 61.91 L38.27 61.97 L38.07 62.04 L37.87 62.12 L37.67 62.21 L37.46 62.31 L37.25 62.42 L37.03 62.55 L36.81 62.70 L36.58 62.86 L36.35 63.05 L36.10 63.28 L35.85 63.54 L35.58 63.87 L35.28 64.29 L34.96 64.79 L34.74 64.75 L34.52 64.70 L34.31 64.65 L34.09 64.60 L33.88 64.55 L33.67 64.49 L33.45 64.44 L33.24 64.38 L33.03 64.32 L32.81 64.26 L32.60 64.19 L32.39 64.13 L32.18 64.06 L31.97 63.99 L31.76 63.92 L31.55 63.85 L31.35 63.77 L31.14 63.70 L30.93 63.62 L30.73 63.54 L30.52 63.46 L30.32 63.37 L30.11 63.29 L29.91 63.20 L29.71 63.11 L29.51 63.02 L29.31 62.93 L29.11 62.84 L28.91 62.74 L28.71 62.64 L28.51 62.54 L28.32 62.44 L28.12 62.34 L27.93 62.23 L27.73 62.13 L27.54 62.02 L27.35 61.91 L27.16 61.80 L26.97 61.69 L26.78 61.57 L26.59 61.46 L26.41 61.34 L26.22 61.22 L26.04 61.10 L26.16 60.51 L26.25 60.00 L26.29 59.58 L26.30 59.21 L26.28 58.88 L26.25 58.58 L26.21 58.31 L26.15 58.05 L26.09 57.80 L26.02 57.57 L25.95 57.36 L25.86 57.15 L25.78 56.95 L25.69 56.76 L25.59 56.58 L25.49 56.40 L25.38 56.24 L25.27 56.07 L25.16 55.92 L25.04 55.77 L24.91 55.62 L24.79 55.48 L24.66 55.34 L24.52 55.21 L24.38 55.09 L24.23 54.96 L24.08 54.84 L23.93 54.73 L23.76 54.62 L23.60 54.51 L23.42 54.41 L23.24 54.31 L23.05 54.22 L22.85 54.14 L22.64 54.05 L22.43 53.98 L22.20 53.91 L21.95 53.85 L21.69 53.79 L21.42 53.75 L21.12 53.72 L20.79 53.70 L20.42 53.71 L20.00 53.75 L19.49 53.84 L18.90 53.96 L18.78 53.78 L18.66 53.59 L18.54 53.41 L18.43 53.22 L18.31 53.03 L18.20 52.84 L18.09 52.65 L17.98 52.46 L17.87 52.27 L17.77 52.07 L17.66 51.88 L17.56 51.68 L17.46 51.49 L17.36 51.29 L17.26 51.09 L17.16 50.89 L17.07 50.69 L16.98 50.49 L16.89 50.29 L16.80 50.09 L16.71 49.89 L16.63 49.68 L16.54 49.48 L16.46 49.27 L16.38 49.07 L16.30 48.86 L16.23 48.65 L16.15 48.45 L16.08 48.24 L16.01 48.03 L15.94 47.82 L15.87 47.61 L15.81 47.40 L15.74 47.19 L15.68 46.97 L15.62 46.76 L15.56 46.55 L15.51 46.33 L15.45 46.12 L15.40 45.91 L15.35 45.69 L15.30 45.48 L15.25 45.26 L15.21 45.04 L15.71 44.72 L16.13 44.42 L16.46 44.15 L16.72 43.90 L16.95 43.65 L17.14 43.42 L17.30 43.19 L17.45 42.97 L17.58 42.75 L17.69 42.54 L17.79 42.33 L17.88 42.13 L17.96 41.93 L18.03 41.73 L18.09 41.53 L18.14 41.34 L18.18 41.14 L18.22 40.95 L18.25 40.76 L18.27 40.57 L18.29 40.38 L18.30 40.19 L18.30 40.00 L18.30 39.81 L18.29 39.62 L18.27 39.43 L18.25 39.24 L18.22 39.05 L18.18 38.86 L18.14 38.66 L18.09 38.47 L18.03 38.27 L17.96 38.07 L17.88 37.87 L17.79 37.67 L17.69 37.46 L17.58 37.25 L17.45 37.03 L17.30 36.81 L17.14 36.58 L16.95 36.35 L16.72 36.10 L16.46 35.85 L16.13 35.58 L15.71 35.28 L15.21 34.96 L15.25 34.74 L15.30 34.52 L15.35 34.31 L15.40 34.09 L15.45 33.88 L15.51 33.67 L15.56 33.45 L15.62 33.24 L15.68 33.03 L15.74 32.81 L15.81 32.60 L15.87 32.39 L15.94 32.18 L16.01 31.97 L16.08 31.76 L16.15 31.55 L16.23 31.35 L16.30 31.14 L16.38 30.93 L16.46 30.73 L16.54 30.52 L16.63 30.32 L16.71 30.11 L16.80 29.91 L16.89 29.71 L16.98 29.51 L17.07 29.31 L17.16 29.11 L17.26 28.91 L17.36 28.71 L17.46 28.51 L17.56 28.32 L17.66 28.12 L17.77 27.93 L17.87 27.73 L17.98 27.54 L18.09 27.35 L18.20 27.16 L18.31 26.97 L18.43 26.78 L18.54 26.59 L18.66 26.41 L18.78 26.22 L18.90 26.04 L19.49 26.16 L20.00 26.25 L20.42 26.29 L20.79 26.30 L21.12 26.28 L21.42 26.25 L21.69 26.21 L21.95 26.15 L22.20 26.09 L22.43 26.02 L22.64 25.95 L22.85 25.86 L23.05 25.78 L23.24 25.69 L23.42 25.59 L23.60 25.49 L23.76 25.38 L23.93 25.27 L24.08 25.16 L24.23 25.04 L24.38 24.91 L24.52 24.79 L24.66 24.66 L24.79 24.52 L24.91 24.38 L25.04 24.23 L25.16 24.08 L25.27 23.93 L25.38 23.76 L25.49 23.60 L25.59 23.42 L25.69 23.24 L25.78 23.05 L25.86 22.85 L25.95 22.64 L26.02 22.43 L26.09 22.20 L26.15 21.95 L26.21 21.69 L26.25 21.42 L26.28 21.12 L26.30 20.79 L26.29 20.42 L26.25 20.00 L26.16 19.49 L26.04 18.90 L26.22 18.78 L26.41 18.66 L26.59 18.54 L26.78 18.43 L26.97 18.31 L27.16 18.20 L27.35 18.09 L27.54 17.98 L27.73 17.87 L27.93 17.77 L28.12 17.66 L28.32 17.56 L28.51 17.46 L28.71 17.36 L28.91 17.26 L29.11 17.16 L29.31 17.07 L29.51 16.98 L29.71 16.89 L29.91 16.80 L30.11 16.71 L30.32 16.63 L30.52 16.54 L30.73 16.46 L30.93 16.38 L31.14 16.30 L31.35 16.23 L31.55 16.15 L31.76 16.08 L31.97 16.01 L32.18 15.94 L32.39 15.87 L32.60 15.81 L32.81 15.74 L33.03 15.68 L33.24 15.62 L33.45 15.56 L33.67 15.51 L33.88 15.45 L34.09 15.40 L34.31 15.35 L34.52 15.30 L34.74 15.25 L34.96 15.21 L35.28 15.71 L35.58 16.13 L35.85 16.46 L36.10 16.72 L36.35 16.95 L36.58 17.14 L36.81 17.30 L37.03 17.45 L37.25 17.58 L37.46 17.69 L37.67 17.79 L37.87 17.88 L38.07 17.96 L38.27 18.03 L38.47 18.09 L38.66 18.14 L38.86 18.18 L39.05 18.22 L39.24 18.25 L39.43 18.27 L39.62 18.29 L39.81 18.30 L40.00 18.30 L40.19 18.30 L40.38 18.29 L40.57 18.27 L40.76 18.25 L40.95 18.22 L41.14 18.18 L41.34 18.14 L41.53 18.09 L41.73 18.03 L41.93 17.96 L42.13 17.88 L42.33 17.79 L42.54 17.69 L42.75 17.58 L42.97 17.45 L43.19 17.30 L43.42 17.14 L43.65 16.95 L43.90 16.72 L44.15 16.46 L44.42 16.13 L44.72 15.71 L45.04 15.21 L45.26 15.25 L45.48 15.30 L45.69 15.35 L45.91 15.40 L46.12 15.45 L46.33 15.51 L46.55 15.56 L46.76 15.62 L46.97 15.68 L47.19 15.74 L47.40 15.81 L47.61 15.87 L47.82 15.94 L48.03 16.01 L48.24 16.08 L48.45 16.15 L48.65 16.23 L48.86 16.30 L49.07 16.38 L49.27 16.46 L49.48 16.54 L49.68 16.63 L49.89 16.71 L50.09 16.80 L50.29 16.89 L50.49 16.98 L50.69 17.07 L50.89 17.16 L51.09 17.26 L51.29 17.36 L51.49 17.46 L51.68 17.56 L51.88 17.66 L52.07 17.77 L52.27 17.87 L52.46 17.98 L52.65 18.09 L52.84 18.20 L53.03 18.31 L53.22 18.43 L53.41 18.54 L53.59 18.66 L53.78 18.78 L53.96 18.90 L53.84 19.49 L53.75 20.00 L53.71 20.42 L53.70 20.79 L53.72 21.12 L53.75 21.42 L53.79 21.69 L53.85 21.95 L53.91 22.20 L53.98 22.43 L54.05 22.64 L54.14 22.85 L54.22 23.05 L54.31 23.24 L54.41 23.42 L54.51 23.60 L54.62 23.76 L54.73 23.93 L54.84 24.08 L54.96 24.23 L55.09 24.38 L55.21 24.52 L55.34 24.66 L55.48 24.79 L55.62 24.91 L55.77 25.04 L55.92 25.16 L56.07 25.27 L56.24 25.38 L56.40 25.49 L56.58 25.59 L56.76 25.69 L56.95 25.78 L57.15 25.86 L57.36 25.95 L57.57 26.02 L57.80 26.09 L58.05 26.15 L58.31 26.21 L58.58 26.25 L58.88 26.28 L59.21 26.30 L59.58 26.29 L60.00 26.25 L60.51 26.16 L61.10 26.04 L61.22 26.22 L61.34 26.41 L61.46 26.59 L61.57 26.78 L61.69 26.97 L61.80 27.16 L61.91 27.35 L62.02 27.54 L62.13 27.73 L62.23 27.93 L62.34 28.12 L62.44 28.32 L62.54 28.51 L62.64 28.71 L62.74 28.91 L62.84 29.11 L62.93 29.31 L63.02 29.51 L63.11 29.71 L63.20 29.91 L63.29 30.11 L63.37 30.32 L63.46 30.52 L63.54 30.73 L63.62 30.93 L63.70 31.14 L63.77 31.35 L63.85 31.55 L63.92 31.76 L63.99 31.97 L64.06 32.18 L64.13 32.39 L64.19 32.60 L64.26 32.81 L64.32 33.03 L64.38 33.24 L64.44 33.45 L64.49 33.67 L64.55 33.88 L64.60 34.09 L64.65 34.31 L64.70 34.52 L64.75 34.74 L64.79 34.96 L64.29 35.28 L63.87 35.58 L63.54 35.85 L63.28 36.10 L63.05 36.35 L62.86 36.58 L62.70 36.81 L62.55 37.03 L62.42 37.25 L62.31 37.46 L62.21 37.67 L62.12 37.87 L62.04 38.07 L61.97 38.27 L61.91 38.47 L61.86 38.66 L61.82 38.86 L61.78 39.05 L61.75 39.24 L61.73 39.43 L61.71 39.62 L61.70 39.81Z M40 22.9A17.1 17.1 0 1 0 40 57.1A17.1 17.1 0 1 0 40 22.9Z"/><g stroke="#fff" fill="none"><path d="M31.5 33L48 48.5" stroke-width="4.6"/><path d="M46 37L50.3 31.6" stroke-width="1.6"/><path d="M33 47.5L41.5 39.5" stroke-width="5.2" stroke-linecap="round"/></g><circle cx="31" cy="32.6" r="3.6" fill="#fff"/><circle cx="48.6" cy="49" r="3.6" fill="#fff"/><path d="M27.2 30.8L30.6 34.2 M52.4 50.8L49 47.4" stroke="#b2b2b2" stroke-width="2.6"/></svg>
    </div>
  </div>
</div>

<div id="home"></div>
</body>
</html>
